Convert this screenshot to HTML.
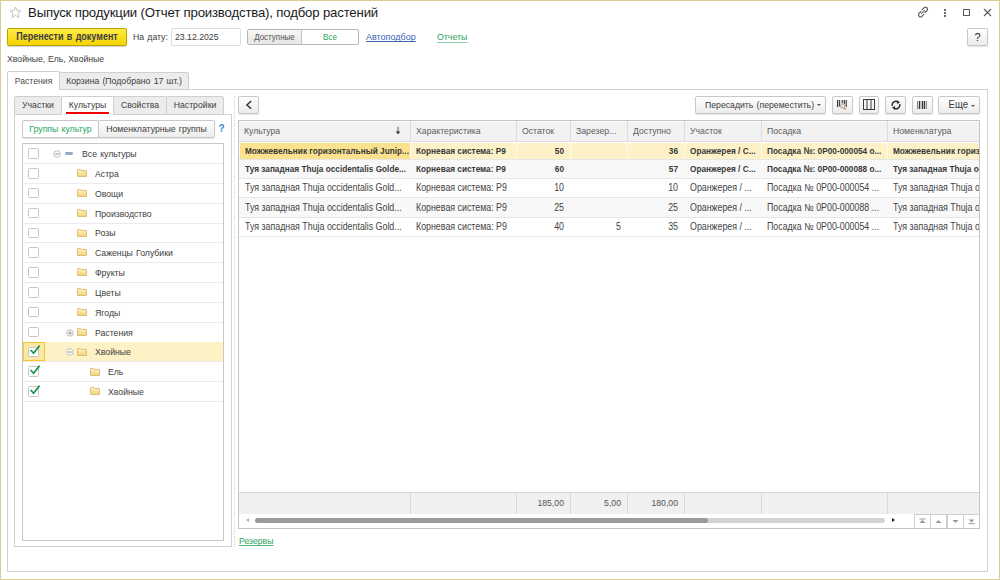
<!DOCTYPE html>
<html><head><meta charset="utf-8">
<style>
*{box-sizing:border-box;margin:0;padding:0}
html,body{width:1000px;height:580px;overflow:hidden;background:#fff}
body{position:relative;font-family:"Liberation Sans",sans-serif;font-size:8.7px;word-spacing:0.8px;color:#404040}
.a{position:absolute;white-space:nowrap;text-decoration-skip-ink:none}
#win{left:0;top:0;width:1000px;height:580px;border:1px solid #d9cd96;background:#fff}
.btn{position:absolute;border:1px solid #c8c8c8;border-radius:2px;background:linear-gradient(#ffffff,#ececec);box-shadow:0 1px 1px rgba(0,0,0,.12)}
.tab{position:absolute;border:1px solid #cfcfcf;border-bottom:none;background:#ececec;border-radius:2px 2px 0 0;text-align:center}
.frame{position:absolute;border:1px solid #d0d0d0}
.trow{position:absolute;left:0;width:200px;height:20px;border-bottom:1px solid #ebebeb}
.cur{position:absolute;left:0;top:0;width:22px;height:100%;background:#fbe8a6;border:1.5px solid #f5c630}
.cb{position:absolute;left:5px;top:4.2px;width:11px;height:10.5px;border:1px solid #c6c6c6;border-radius:1.5px;background:#fff}
.ck{position:absolute;left:0;top:0;width:20px;height:20px}
.ex{position:absolute;top:6px;width:8px;height:8px}
.dash{position:absolute;top:7.9px;width:7.5px;height:2.8px;border-radius:1.4px;background:#8fabc6}
.fold{position:absolute;top:5.3px;width:10px;height:8px}
.tt{position:absolute;top:5px;color:#3c3c3c}
i,.s{font-style:normal;display:inline-block;transform:scaleY(1.14);transform-origin:50% 60%}
.ghead{position:absolute;left:0;top:0;width:740px;height:21px;background:#f2f2f2;border-bottom:1px solid #dcdcdc;box-shadow:inset 0 1px #fbfbfb}
.hd{position:absolute;top:0;height:20px;border-left:1px solid #dcdcdc;padding-left:5px;line-height:20px;color:#5c5c5c}
.grow{position:absolute;left:0;width:740px;border-bottom:1px solid #e6e6e6;background:#fff}
.grow.alt{background:#f8f8f8}
.grow.sel{background:#fdf1c8}
.c{position:absolute;top:0;height:100%;overflow:hidden;padding-left:5px;white-space:nowrap;display:flex;align-items:center;color:#444;border-left:1px solid transparent}
.sel .c{border-left-color:#fffbee}
.c.r{justify-content:flex-end;padding-right:6px;padding-left:0}
.c.curc{background:#fbe28e}
.gfoot{position:absolute;left:0;top:371px;width:740px;height:21.5px;background:#f0f0f0;border-top:1px solid #d6d6d6}
.gfoot .c{color:#555}
.sb{position:absolute;left:0;top:392.5px;width:740px;height:14px;background:#fff}
.nav{position:absolute;left:675px;top:392.5px;width:66px;height:15px}
.nb{position:absolute;top:0;width:17px;height:15px;border:1px solid #cfcfcf;background:#fff}
.b .c{font-weight:bold;color:#383838;font-size:8.25px}
.grow .c{font-size:8.85px;padding-top:1px;word-spacing:0}
.grow.sel .c{padding-top:2px}
.grow.b .c{font-size:8.25px}
</style></head>
<body>
<svg width="0" height="0" style="position:absolute"><defs>
<linearGradient id="fg" x1="0" y1="0" x2="0" y2="1"><stop offset="0" stop-color="#fdf3c4"/><stop offset="1" stop-color="#f1d27a"/></linearGradient>
<symbol id="fd" viewBox="0 0 10 8"><path d="M0.5 1.1 Q0.5 0.5 1.1 0.5 H3.6 L4.5 1.4 H9 Q9.5 1.4 9.5 2 V7 Q9.5 7.5 9 7.5 H1 Q0.5 7.5 0.5 7 Z" fill="url(#fg)" stroke="#d4b262" stroke-width="0.8"/></symbol>
<symbol id="ck" viewBox="0 0 20 20"><path d="M7.6 8 L10.6 11.2 L16.6 3.6" fill="none" stroke="#17974a" stroke-width="1.7"/></symbol>
<symbol id="minus" viewBox="0 0 8 8"><circle cx="4" cy="4" r="3.2" fill="#fff" stroke="#b4b4b4" stroke-width="0.9"/><path d="M2.3 4 H5.7" stroke="#8a8a8a" stroke-width="1"/></symbol>
<symbol id="plus" viewBox="0 0 8 8"><circle cx="4" cy="4" r="3.2" fill="#fff" stroke="#b4b4b4" stroke-width="0.9"/><path d="M2.3 4 H5.7 M4 2.3 V5.7" stroke="#8a8a8a" stroke-width="1"/></symbol>
</defs></svg>
<div id="win" class="a"></div>

<!-- title bar -->
<svg class="a" style="left:8.5px;top:6px" width="13" height="13" viewBox="0 0 13 13"><path d="M6.5 1 L8.1 4.7 L12 5 L9 7.6 L10 11.6 L6.5 9.5 L3 11.6 L4 7.6 L1 5 L4.9 4.7 Z" fill="none" stroke="#b9b9b9" stroke-width="0.9"/></svg>
<div class="a" style="left:28px;top:4.5px;font-size:13.2px;letter-spacing:-0.17px;word-spacing:0;color:#1a1a1a">Выпуск продукции (Отчет производства), подбор растений</div>

<!-- window icons -->
<svg class="a" style="left:917px;top:6px" width="12" height="12" viewBox="0 0 12 12"><g fill="none" stroke="#6a6a6a" stroke-width="1.25" stroke-linecap="round"><path d="M5.2 3.6 L7 1.8 a2 2 0 0 1 2.9 2.9 L8.1 6.5"/><path d="M6.8 8.4 L5 10.2 a2 2 0 0 1 -2.9 -2.9 L3.9 5.5"/><path d="M4.6 7.4 L7.4 4.6"/></g></svg>
<div class="a" style="left:944px;top:9px;width:2px;height:2px;background:#6a6a6a"></div>
<div class="a" style="left:944px;top:12px;width:2px;height:2px;background:#6a6a6a"></div>
<div class="a" style="left:944px;top:15px;width:2px;height:2px;background:#6a6a6a"></div>
<div class="a" style="left:963px;top:9px;width:7px;height:7px;border:1px solid #5a5a5a"></div>
<svg class="a" style="left:983px;top:8px" width="9" height="9" viewBox="0 0 9 9"><path d="M1 1 L8 8 M8 1 L1 8" stroke="#5a5a5a" stroke-width="1.1"/></svg>

<!-- toolbar row -->
<div class="a" style="left:7px;top:28px;width:120px;height:18px;border:1px solid #bea400;border-radius:2px;background:linear-gradient(#ffec45,#f4d300);box-shadow:0 1px 1px rgba(0,0,0,.18);font-weight:bold;font-size:9px;color:#3c3c48;text-align:center;line-height:16px"><i>Перенести в документ</i></div>
<div class="a" style="left:133px;top:32px"><i>На дату:</i></div>
<div class="a" style="left:171px;top:28px;width:70px;height:18px;border:1px solid #dcdcdc;border-radius:2px;padding-left:3px;line-height:16px;color:#404040"><i>23.12.2025</i></div>
<div class="a" style="left:247px;top:29px;width:112px;height:16px;border:1px solid #b5b5b5;border-radius:2px;background:#fff"></div>
<div class="a" style="left:248px;top:30px;width:54px;height:14px;background:linear-gradient(#f7f7f7,#e6e6e6);border-right:1px solid #c4c4c4;font-size:8px;text-align:center;line-height:15.5px;color:#555"><i>Доступные</i></div>
<div class="a" style="left:302px;top:30px;width:56px;height:14px;font-size:8px;text-align:center;line-height:15.5px;color:#25a45c"><i>Все</i></div>
<div class="a" style="left:366px;top:32px;color:#3b64b9;text-decoration:underline;font-size:9px">Автоподбор</div>
<div class="a" style="left:437px;top:32px;color:#2ca25c;text-decoration:underline;text-decoration-color:#86cfa4;text-underline-offset:1.5px;font-size:8.8px">Отчеты</div>
<div class="btn" style="left:967px;top:28px;width:21px;height:18px;text-align:center;line-height:17.5px;font-size:11px;color:#1a1a1a">?</div>

<div class="a" style="left:7px;top:54px;word-spacing:0.2px"><i>Хвойные, Ель, Хвойные</i></div>

<!-- main tabs -->
<div class="frame" style="left:7px;top:89px;width:981px;height:483px"></div>
<div class="tab" style="left:7px;top:71px;width:53px;height:19px;background:#fff;line-height:18px;color:#4d4d4d"><i>Растения</i></div>
<div class="tab" style="left:59px;top:71.5px;width:130px;height:18px;line-height:17px;border-bottom:1px solid #cfcfcf"><i>Корзина (Подобрано 17 шт.)</i></div>

<!-- left panel tabs -->
<div class="frame" style="left:14px;top:114px;width:218px;height:433px"></div>
<div class="tab" style="left:14px;top:96px;width:48px;height:19px;line-height:16.5px;border-bottom:1px solid #cfcfcf"><i>Участки</i></div>
<div class="tab" style="left:61px;top:96px;width:53px;height:19px;line-height:16.5px;background:#fff"><i>Культуры</i></div>
<div class="a" style="left:66px;top:111.5px;width:43px;height:2px;background:#f00000"></div>
<div class="tab" style="left:113px;top:96px;width:54px;height:19px;line-height:16.5px;border-bottom:1px solid #cfcfcf"><i>Свойства</i></div>
<div class="tab" style="left:166px;top:96px;width:58px;height:19px;line-height:16.5px;border-bottom:1px solid #cfcfcf"><i>Настройки</i></div>

<!-- group buttons -->
<div class="btn" style="left:22px;top:120px;width:77px;height:18px;background:#fff;line-height:16px;text-align:center;color:#25a45c"><i>Группы культур</i></div>
<div class="btn" style="left:98px;top:120px;width:117px;height:18px;line-height:16px;text-align:center"><i>Номенклатурные группы</i></div>
<div class="a" style="left:218.5px;top:122.5px;color:#3389d0;font-size:10px;font-weight:bold">?</div>

<!-- tree -->
<div id="tree" class="frame" style="left:22px;top:143px;width:202px;height:398px;border-color:#c8c8c8">
<div class="trow" style="top:0.0px;">
<div class="cb"></div>
<svg class="ex" style="left:30px"><use href="#minus"/></svg>
<div class="dash" style="left:42.2px"></div>
<div class="tt" style="left:59px"><i>Все культуры</i></div>
</div>
<div class="trow" style="top:19.84px;">
<div class="cb"></div>
<svg class="fold" style="left:54.2px"><use href="#fd"/></svg>
<div class="tt" style="left:72px"><i>Астра</i></div>
</div>
<div class="trow" style="top:39.68px;">
<div class="cb"></div>
<svg class="fold" style="left:54.2px"><use href="#fd"/></svg>
<div class="tt" style="left:72px"><i>Овощи</i></div>
</div>
<div class="trow" style="top:59.52px;">
<div class="cb"></div>
<svg class="fold" style="left:54.2px"><use href="#fd"/></svg>
<div class="tt" style="left:72px"><i>Производство</i></div>
</div>
<div class="trow" style="top:79.36px;">
<div class="cb"></div>
<svg class="fold" style="left:54.2px"><use href="#fd"/></svg>
<div class="tt" style="left:72px"><i>Розы</i></div>
</div>
<div class="trow" style="top:99.2px;">
<div class="cb"></div>
<svg class="fold" style="left:54.2px"><use href="#fd"/></svg>
<div class="tt" style="left:72px"><i>Саженцы Голубики</i></div>
</div>
<div class="trow" style="top:119.04px;">
<div class="cb"></div>
<svg class="fold" style="left:54.2px"><use href="#fd"/></svg>
<div class="tt" style="left:72px"><i>Фрукты</i></div>
</div>
<div class="trow" style="top:138.88px;">
<div class="cb"></div>
<svg class="fold" style="left:54.2px"><use href="#fd"/></svg>
<div class="tt" style="left:72px"><i>Цветы</i></div>
</div>
<div class="trow" style="top:158.72px;">
<div class="cb"></div>
<svg class="fold" style="left:54.2px"><use href="#fd"/></svg>
<div class="tt" style="left:72px"><i>Ягоды</i></div>
</div>
<div class="trow" style="top:178.56px;">
<div class="cb"></div>
<svg class="ex" style="left:43px"><use href="#plus"/></svg>
<svg class="fold" style="left:54.2px"><use href="#fd"/></svg>
<div class="tt" style="left:72px"><i>Растения</i></div>
</div>
<div class="trow" style="top:198.4px;background:#fdf1c6;">
<div class="cur"></div>
<div class="cb"></div><svg class="ck"><use href="#ck"/></svg>
<svg class="ex" style="left:43px"><use href="#minus"/></svg>
<svg class="fold" style="left:54.2px"><use href="#fd"/></svg>
<div class="tt" style="left:72px"><i>Хвойные</i></div>
</div>
<div class="trow" style="top:218.24px;">
<div class="cb"></div><svg class="ck"><use href="#ck"/></svg>
<svg class="fold" style="left:67px"><use href="#fd"/></svg>
<div class="tt" style="left:85px"><i>Ель</i></div>
</div>
<div class="trow" style="top:238.08px;">
<div class="cb"></div><svg class="ck"><use href="#ck"/></svg>
<svg class="fold" style="left:67px"><use href="#fd"/></svg>
<div class="tt" style="left:85px"><i>Хвойные</i></div>
</div>
</div>

<!-- splitter -->
<div class="a" style="left:234px;top:96px;width:1px;height:451px;border-left:1px dotted #d4d4d4"></div>

<!-- right panel -->
<div class="btn" style="left:238px;top:96px;width:21px;height:18px"></div>
<svg class="a" style="left:244px;top:99.5px" width="10" height="10" viewBox="0 0 10 10"><path d="M7.2 1 L2.9 4.9 L7.2 8.8" fill="none" stroke="#2a2a2a" stroke-width="1.35"/></svg>

<div class="btn" style="left:695px;top:96px;width:131px;height:18px;line-height:16px;padding-left:9px"><i>Пересадить (переместить)</i></div>
<div class="a" style="left:817px;top:104px;width:0;height:0;border-left:2.5px solid transparent;border-right:2.5px solid transparent;border-top:2.5px solid #555"></div>
<div class="btn" style="left:832px;top:96px;width:21px;height:18px"></div>
<svg class="a" style="left:836px;top:99px" width="13" height="12" viewBox="0 0 13 12"><g stroke="#3a3a3a"><path d="M1.5 1 V8.2" stroke-width="1"/><path d="M3.4 1 V7.5" stroke-width="1"/><path d="M6.3 1 V4" stroke-width="1"/><path d="M8.6 1 V5" stroke-width="1"/><path d="M10.4 1 V8.2" stroke-width="0.9"/></g><g stroke="#9a9a9a" stroke-width="0.6"><path d="M2.4 1 V8 M5 1 V5 M7.5 1 V4.5 M9.5 1 V7"/></g><path d="M7.9 8.6 L9.6 10.5" stroke="#c07a3a" stroke-width="1.4"/><circle cx="6.5" cy="7" r="2.2" fill="#d4e5fa" stroke="#c9966a" stroke-width="0.8"/></svg>
<div class="btn" style="left:859px;top:96px;width:20px;height:18px"></div>
<svg class="a" style="left:863px;top:99px" width="12" height="11" viewBox="0 0 12 11"><g fill="none" stroke="#3d3d3d" stroke-width="1"><rect x="0.5" y="0.5" width="11" height="10"/><path d="M4 0.5 V10.5 M8 0.5 V10.5"/></g></svg>
<div class="btn" style="left:885px;top:96px;width:21px;height:18px"></div>
<svg class="a" style="left:890.5px;top:99.5px" width="10" height="10" viewBox="0 0 10 10"><g fill="none" stroke="#2a2a2a" stroke-width="1.5"><path d="M1.3 5.8 A3.8 3.8 0 0 1 7.2 1.9"/><path d="M8.7 4.2 A3.8 3.8 0 0 1 2.8 8.1"/></g><path d="M6 0.3 L9 2.4 L5.9 3.9 Z" fill="#2a2a2a"/><path d="M4 9.7 L1 7.6 L4.1 6.1 Z" fill="#2a2a2a"/></svg>
<div class="btn" style="left:912px;top:96px;width:21px;height:18px"></div>
<svg class="a" style="left:917px;top:101px" width="10" height="8" viewBox="0 0 10 8"><rect x="0" y="0" width="10" height="8" fill="#b8b8b8"/><g stroke="#333" stroke-width="1"><path d="M2.5 0 V8 M5.5 0 V8 M7.5 0 V8"/></g><g stroke="#777" stroke-width="0.8"><path d="M0.5 0 V8 M9.4 0 V8"/></g><g stroke="#e0e0e0" stroke-width="0.7"><path d="M1.5 0 V8 M4 0 V8 M8.5 0 V8"/></g></svg>
<div class="btn" style="left:938px;top:96px;width:42px;height:18px;line-height:16.5px;padding-left:9.5px;font-size:9.6px"><i>Еще</i></div>
<div class="a" style="left:971px;top:105px;width:0;height:0;border-left:2.5px solid transparent;border-right:2.5px solid transparent;border-top:2.5px solid #555"></div>

<!-- grid -->
<div id="grid" class="frame" style="left:238px;top:120px;width:742px;height:409px;border-color:#c4c4c4;overflow:hidden">
<div class="ghead">
<div class="hd" style="left:0px;width:171px;border-left:none;"><i>Культура</i></div>
<div class="hd" style="left:171px;width:106px;"><i>Характеристика</i></div>
<div class="hd" style="left:277px;width:54px;"><i>Остаток</i></div>
<div class="hd" style="left:331px;width:57px;"><i>Зарезер...</i></div>
<div class="hd" style="left:388px;width:57px;"><i>Доступно</i></div>
<div class="hd" style="left:445px;width:77px;"><i>Участок</i></div>
<div class="hd" style="left:522px;width:126px;"><i>Посадка</i></div>
<div class="hd" style="left:648px;width:213px;"><i>Номенклатура</i></div>
<svg class="a" style="left:156px;top:5px" width="6" height="9" viewBox="0 0 6 9"><path d="M3 0.8 V6" stroke="#6a6a6a" stroke-width="1.1"/><path d="M0.6 5.4 H5.4 L3 8.2 Z" fill="#333"/></svg>
</div>
<div class="grow sel b" style="top:22px;height:16.5px">
<div class="c curc" style="left:0px;width:171px"><i>Можжевельник горизонтальный Junip...</i></div>
<div class="c" style="left:171px;width:106px"><i>Корневая система: Р9</i></div>
<div class="c r" style="left:277px;width:54px"><i>50</i></div>
<div class="c r" style="left:331px;width:57px"><i></i></div>
<div class="c r" style="left:388px;width:57px"><i>36</i></div>
<div class="c" style="left:445px;width:77px"><i>Оранжерея / С...</i></div>
<div class="c" style="left:522px;width:126px"><i>Посадка №: 0Р00-000054 о...</i></div>
<div class="c" style="left:648px;width:213px"><i>Можжевельник горизонтальный Juniperus</i></div>
</div>
<div class="grow alt b" style="top:38.5px;height:19.0px">
<div class="c" style="left:0px;width:171px"><i>Туя западная Thuja occidentalis Golde...</i></div>
<div class="c" style="left:171px;width:106px"><i>Корневая система: Р9</i></div>
<div class="c r" style="left:277px;width:54px"><i>60</i></div>
<div class="c r" style="left:331px;width:57px"><i></i></div>
<div class="c r" style="left:388px;width:57px"><i>57</i></div>
<div class="c" style="left:445px;width:77px"><i>Оранжерея / С...</i></div>
<div class="c" style="left:522px;width:126px"><i>Посадка №: 0Р00-000088 о...</i></div>
<div class="c" style="left:648px;width:213px"><i>Туя западная Thuja occidentalis</i></div>
</div>
<div class="grow" style="top:57.5px;height:19.5px">
<div class="c" style="left:0px;width:171px"><i>Туя западная Thuja occidentalis Gold...</i></div>
<div class="c" style="left:171px;width:106px"><i>Корневая система: Р9</i></div>
<div class="c r" style="left:277px;width:54px"><i>10</i></div>
<div class="c r" style="left:331px;width:57px"><i></i></div>
<div class="c r" style="left:388px;width:57px"><i>10</i></div>
<div class="c" style="left:445px;width:77px"><i>Оранжерея / ...</i></div>
<div class="c" style="left:522px;width:126px"><i>Посадка № 0Р00-000054 ...</i></div>
<div class="c" style="left:648px;width:213px"><i>Туя западная Thuja occidentalis</i></div>
</div>
<div class="grow alt" style="top:77px;height:19.5px">
<div class="c" style="left:0px;width:171px"><i>Туя западная Thuja occidentalis Gold...</i></div>
<div class="c" style="left:171px;width:106px"><i>Корневая система: Р9</i></div>
<div class="c r" style="left:277px;width:54px"><i>25</i></div>
<div class="c r" style="left:331px;width:57px"><i></i></div>
<div class="c r" style="left:388px;width:57px"><i>25</i></div>
<div class="c" style="left:445px;width:77px"><i>Оранжерея / ...</i></div>
<div class="c" style="left:522px;width:126px"><i>Посадка № 0Р00-000088 ...</i></div>
<div class="c" style="left:648px;width:213px"><i>Туя западная Thuja occidentalis</i></div>
</div>
<div class="grow" style="top:96.5px;height:19.5px">
<div class="c" style="left:0px;width:171px"><i>Туя западная Thuja occidentalis Gold...</i></div>
<div class="c" style="left:171px;width:106px"><i>Корневая система: Р9</i></div>
<div class="c r" style="left:277px;width:54px"><i>40</i></div>
<div class="c r" style="left:331px;width:57px"><i>5</i></div>
<div class="c r" style="left:388px;width:57px"><i>35</i></div>
<div class="c" style="left:445px;width:77px"><i>Оранжерея / ...</i></div>
<div class="c" style="left:522px;width:126px"><i>Посадка № 0Р00-000054 ...</i></div>
<div class="c" style="left:648px;width:213px"><i>Туя западная Thuja occidentalis</i></div>
</div>
<div class="gfoot">
<div class="c r" style="left:0px;width:171px;"><i></i></div>
<div class="c r" style="left:171px;width:106px;border-left:1px solid #d8d8d8"><i></i></div>
<div class="c r" style="left:277px;width:54px;border-left:1px solid #d8d8d8"><i>185,00</i></div>
<div class="c r" style="left:331px;width:57px;border-left:1px solid #d8d8d8"><i>5,00</i></div>
<div class="c r" style="left:388px;width:57px;border-left:1px solid #d8d8d8"><i>180,00</i></div>
<div class="c r" style="left:445px;width:77px;border-left:1px solid #d8d8d8"><i></i></div>
<div class="c r" style="left:522px;width:126px;border-left:1px solid #d8d8d8"><i></i></div>
<div class="c r" style="left:648px;width:213px;border-left:1px solid #d8d8d8"><i></i></div>
</div>
<div class="sb">
<div class="a" style="left:7px;top:4px;width:0;height:0;border-top:2.5px solid transparent;border-bottom:2.5px solid transparent;border-right:3px solid #b0b0b0"></div>
<div class="a" style="left:463px;top:4px;width:183px;height:5.5px;border-radius:3px;background:#d3d3d3"></div>
<div class="a" style="left:16px;top:4px;width:453px;height:5.5px;border-radius:3px;background:#9a9a9a"></div>
<div class="a" style="left:653px;top:4.5px;width:0;height:0;border-top:2.5px solid transparent;border-bottom:2.5px solid transparent;border-left:3px solid #222"></div>
</div>
<div class="nav">
<div class="nb" style="left:0.0px"><svg style="position:absolute;left:-1px;top:3.5px" width="17" height="7" viewBox="0 0 17 7"><path d="M5.5 1 H11.5" stroke="#9a9a9a" stroke-width="1"/><path d="M8.5 1.8 L11.5 5 H5.5 Z" fill="#9a9a9a"/></svg></div>
<div class="nb" style="left:16.4px"><svg style="position:absolute;left:-1px;top:3.5px" width="17" height="7" viewBox="0 0 17 7"><path d="M8.5 2 L11.5 5 H5.5 Z" fill="#9a9a9a"/></svg></div>
<div class="nb" style="left:32.8px"><svg style="position:absolute;left:-1px;top:3.5px" width="17" height="7" viewBox="0 0 17 7"><path d="M8.5 5 L11.5 2 H5.5 Z" fill="#9a9a9a"/></svg></div>
<div class="nb" style="left:49.2px"><svg style="position:absolute;left:-1px;top:3.5px" width="17" height="7" viewBox="0 0 17 7"><path d="M8.5 4.4 L11.5 1.4 H5.5 Z" fill="#9a9a9a"/><path d="M5.5 5.6 H11.5" stroke="#9a9a9a" stroke-width="1"/></svg></div>
</div>
</div>

<div class="a" style="left:239px;top:536px;color:#2ca25c;text-decoration:underline;text-decoration-color:#4fb87a">Резервы</div>
</body></html>
